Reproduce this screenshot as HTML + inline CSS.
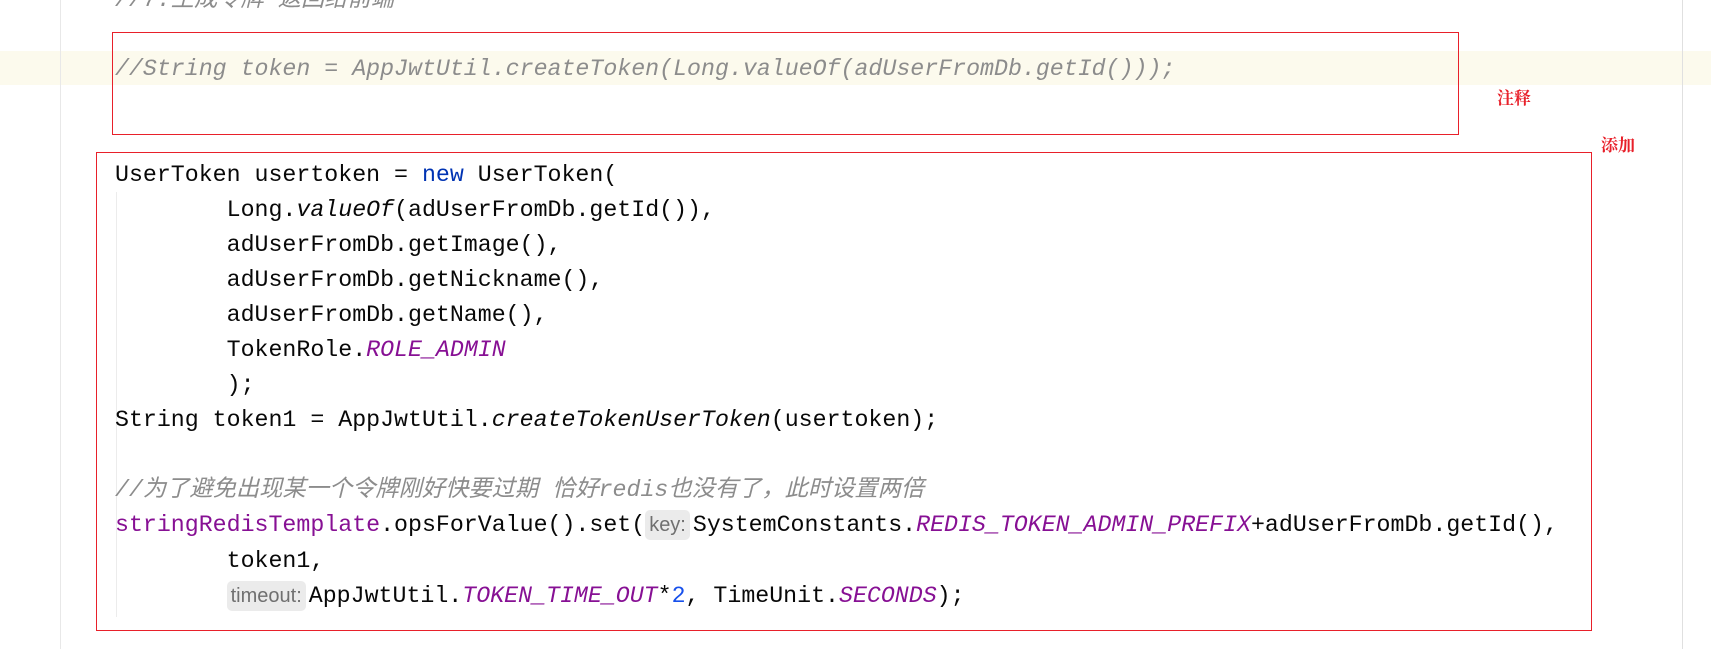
<!DOCTYPE html>
<html><head><meta charset="utf-8"><style>
body{margin:0;width:1711px;height:649px;background:#fff;position:relative;overflow:hidden;font-family:"Liberation Mono","Noto Sans CJK SC",monospace;}
.l{position:absolute;left:115px;height:35px;line-height:35px;font-size:23.25px;color:#080808;white-space:pre;}
.c{color:#8c8c8c;font-style:italic}
.k{color:#0033b3}
.p{color:#871094}
.pi{color:#871094;font-style:italic}
.i{font-style:italic}
.n{color:#1750eb}
.h{display:inline-block;background:#ebebeb;color:#707070;border-radius:5px;font-family:"Liberation Sans",sans-serif;font-size:20px;line-height:30px;padding:0 4px;vertical-align:0px;margin-right:3px}
.box{position:absolute;border:1.5px solid #e8202a}
.lab{position:absolute;color:#e8202a;font-family:"Noto Serif CJK SC",serif;font-size:17px;font-weight:bold}
</style></head><body>
<div style="position:absolute;left:0;top:51px;width:1711px;height:34px;background:#fcfaed"></div>
<div style="position:absolute;left:60px;top:0;width:1px;height:649px;background:#e8e8e8"></div>
<div style="position:absolute;left:1682px;top:0;width:1px;height:649px;background:#e0e0e0"></div>
<div class="l c" style="top:-17px">//7.生成令牌 返回给前端</div>
<div class="l c" style="top:52px">//String token = AppJwtUtil.createToken(Long.valueOf(adUserFromDb.getId()));</div>
<div class="box" style="left:112px;top:32px;width:1345px;height:101px"></div>
<div class="box" style="left:96px;top:152px;width:1494px;height:477px"></div>
<div class="lab" style="left:1497px;top:84px">注释</div>
<div class="lab" style="left:1601px;top:131px">添加</div>
<div style="position:absolute;left:116px;top:192px;width:1px;height:425px;background:#ececec"></div>
<div class="l" style="top:158px">UserToken usertoken = <span class="k">new</span> UserToken(</div>
<div class="l" style="top:193px">        Long.<span class="i">valueOf</span>(adUserFromDb.getId()),</div>
<div class="l" style="top:228px">        adUserFromDb.getImage(),</div>
<div class="l" style="top:263px">        adUserFromDb.getNickname(),</div>
<div class="l" style="top:298px">        adUserFromDb.getName(),</div>
<div class="l" style="top:333px">        TokenRole.<span class="pi">ROLE_ADMIN</span></div>
<div class="l" style="top:368px">        );</div>
<div class="l" style="top:403px">String token1 = AppJwtUtil.<span class="i">createTokenUserToken</span>(usertoken);</div>
<div class="l c" style="top:473px">//为了避免出现某一个令牌刚好快要过期 恰好redis也没有了，此时设置两倍</div>
<div class="l" style="top:508px"><span class="p">stringRedisTemplate</span>.opsForValue().set(<span class="h">key:</span>SystemConstants.<span class="pi">REDIS_TOKEN_ADMIN_PREFIX</span>+adUserFromDb.getId(),</div>
<div class="l" style="top:544px">        token1,</div>
<div class="l" style="top:579px">        <span class="h">timeout:</span>AppJwtUtil.<span class="pi">TOKEN_TIME_OUT</span>*<span class="n">2</span>, TimeUnit.<span class="pi">SECONDS</span>);</div>
</body></html>
